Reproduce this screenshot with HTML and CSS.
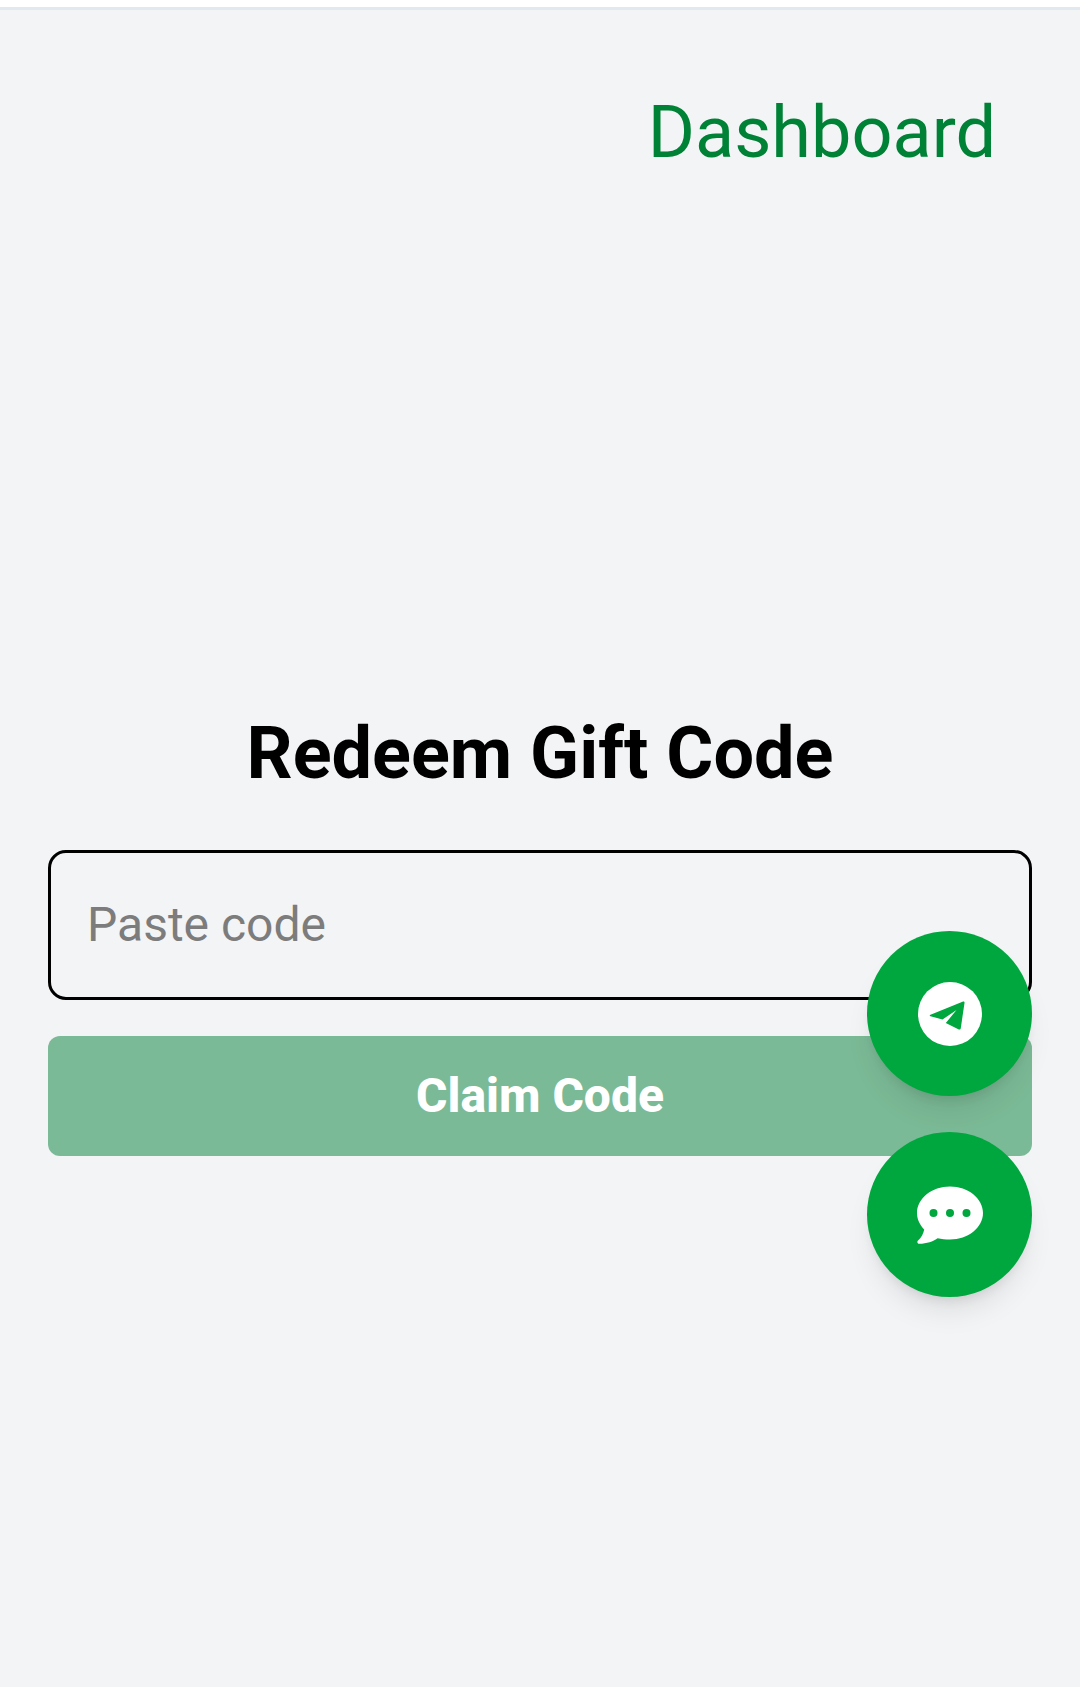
FILE: index.html
```html
<!DOCTYPE html>
<html lang="en">
<head>
<meta charset="utf-8">
<title>Redeem Gift Code</title>
<link rel="stylesheet" href="styles.css">
</head>
<body>
<div class="page">
  <nav class="nav"><a class="nav-link" href="#">Dashboard</a></nav>
  <main class="redeem">
    <h1 class="title">Redeem Gift Code</h1>
    <input class="code-input" type="text" placeholder="Paste code">
    <button class="claim" type="button">Claim Code</button>
  </main>
</div>
<a class="fab fab-telegram" href="#" aria-label="Telegram">
  <svg class="icon-telegram" viewBox="0 0 64 64"><circle cx="32" cy="32" r="32" fill="#fff"/><path d="M46.500 21 42.800 46c-.2 1.500-1.300 2-2.500 1.300L27.800 41 38.500 28 24.500 37.500 12.500 34.200c-1-.3-1-1.100 0-1.500L44.500 19.800c1.300-.5 2.200 0 2 1.200z" fill="#00a63e"/></svg>
</a>
<a class="fab fab-chat" href="#" aria-label="Chat">
  <svg class="icon-chat" viewBox="0 0 66 58"><path d="M33 .5C14.800.5 0 12.400 0 27c0 6.200 2.700 11.900 7.200 16.400-.8 4-2.700 7.900-6.400 11.400-1 1-.2 3 1.300 3C10 57.800 16 55.500 20.500 52.300c3.900.8 8.200 1.200 12.500 1.200 18.200 0 33-11.900 33-26.500S51.200.5 33 .5z" fill="#fff"/><circle cx="16.500" cy="27" r="4" fill="#00a63e"/><circle cx="33" cy="27" r="4" fill="#00a63e"/><circle cx="49.500" cy="27" r="4" fill="#00a63e"/></svg>
</a>
</body>
</html>
```
FILE: styles.css
```css
* { box-sizing: border-box; }
html, body { margin: 0; height: 100%; }
body {
  position: relative;
  background: #fff;
  font-family: Roboto, "Noto Sans", sans-serif;
  overflow: hidden;
}
.page {
  min-height: 1687px;
  margin-top: 7px;
  border-top: 3px solid #e2e8f0;
  background: #f3f4f6;
}
.nav {
  display: flex;
  justify-content: flex-end;
  padding: 81px 48px 0 0;
}
.nav-link {
  margin-right: 36px;
  color: #008236;
  font-size: 72px;
  line-height: 84px;
  text-decoration: none;
}
.redeem {
  display: flex;
  flex-direction: column;
  padding: 537px 48px 0;
}
.title {
  margin: 0 0 54px;
  color: #000;
  font-size: 72px;
  line-height: 84px;
  font-weight: 700;
  text-align: center;
}
.code-input {
  display: block;
  width: 100%;
  height: 150px;
  padding: 0 36px 2px;
  border: 3px solid #000;
  border-radius: 18px;
  background: transparent;
  font: 400 48px Roboto, sans-serif;
  outline: none;
}
.code-input::placeholder { color: #7c7c7c; opacity: 1; }
.claim {
  display: block;
  width: 100%;
  height: 120px;
  margin-top: 36px;
  padding: 0 0 2px;
  border: 0;
  border-radius: 12px;
  background: #7bba96;
  color: #fff;
  font: 800 48px Roboto, sans-serif;
}
.fab {
  position: absolute;
  right: 48px;
  display: flex;
  align-items: center;
  justify-content: center;
  width: 165px;
  height: 165px;
  border-radius: 50%;
  background: #00a63e;
  box-shadow: 0 20px 30px -8px rgba(0, 0, 0, 0.1), 0 8px 12px -6px rgba(0, 0, 0, 0.1);
}
.fab-telegram { top: 931px; }
.fab-chat { top: 1132px; }
.icon-telegram { width: 64px; height: 64px; }
.icon-chat { width: 66px; height: 58px; }
```
